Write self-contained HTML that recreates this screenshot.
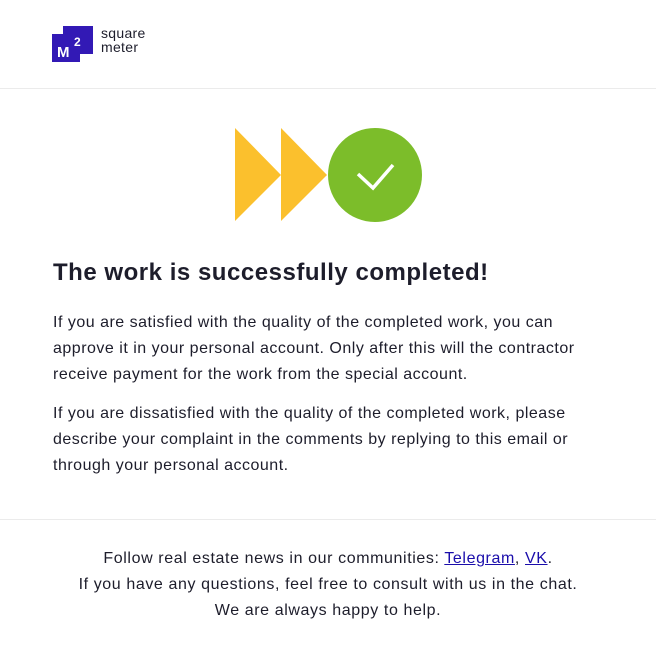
<!DOCTYPE html>
<html><head><meta charset="utf-8"><style>
body{margin:0;background:#fff;font-family:"Liberation Sans",sans-serif;color:#1d1d2b;width:656px;height:651px;overflow:hidden;position:relative}
.hr{position:absolute;left:0;width:656px;height:1px;background:#ebebeb}
h1{position:absolute;left:53px;top:259px;margin:0;font-size:24px;font-weight:bold;letter-spacing:0.52px}
p{position:absolute;left:53px;margin:0;font-size:16px;line-height:26px;width:545px;letter-spacing:0.5px}
.f{position:absolute;left:0;width:656px;text-align:center;font-size:16px;line-height:26px;top:546px;letter-spacing:0.6px}
a{color:#1a0dab;text-decoration:underline}
</style></head><body>
<svg style="position:absolute;left:0;top:0" width="200" height="80">
<rect x="63" y="26" width="30" height="28" fill="#3219b5"/>
<rect x="52" y="34" width="28" height="28" fill="#3219b5"/>
<text x="57" y="57" fill="#fff" font-family="Liberation Sans" font-weight="bold" font-size="15">M</text>
<text x="74" y="46" fill="#fff" font-family="Liberation Sans" font-weight="bold" font-size="12">2</text>
<text x="101" y="38" fill="#1d1d2b" font-family="Liberation Sans" font-size="14" letter-spacing="0.3">square</text>
<text x="101" y="52" fill="#1d1d2b" font-family="Liberation Sans" font-size="14" letter-spacing="0.3">meter</text>
</svg>
<div class="hr" style="top:88px"></div>
<svg style="position:absolute;left:0;top:0" width="656" height="240">
<polygon points="235,128 281,175 235,221" fill="#fbc02d"/>
<polygon points="281,128 327,175 281,221" fill="#fbc02d"/>
<circle cx="375" cy="175" r="47" fill="#7cbd2a"/>
<polyline points="358,174 373,188 393,165" fill="none" stroke="#fff" stroke-width="3.5"/>
</svg>
<h1>The work is successfully completed!</h1>
<p style="top:310px">If you are satisfied with the quality of the completed work, you can approve it in your personal account. Only after this will the contractor receive payment for the work from the special account.</p>
<p style="top:401px">If you are dissatisfied with the quality of the completed work, please describe your complaint in the comments by replying to this email or through your personal account.</p>
<div class="hr" style="top:519px"></div>
<div class="f">Follow real estate news in our communities: <a>Telegram</a>, <a>VK</a>.<br>If you have any questions, feel free to consult with us in the chat.<br>We are always happy to help.</div>
</body></html>
